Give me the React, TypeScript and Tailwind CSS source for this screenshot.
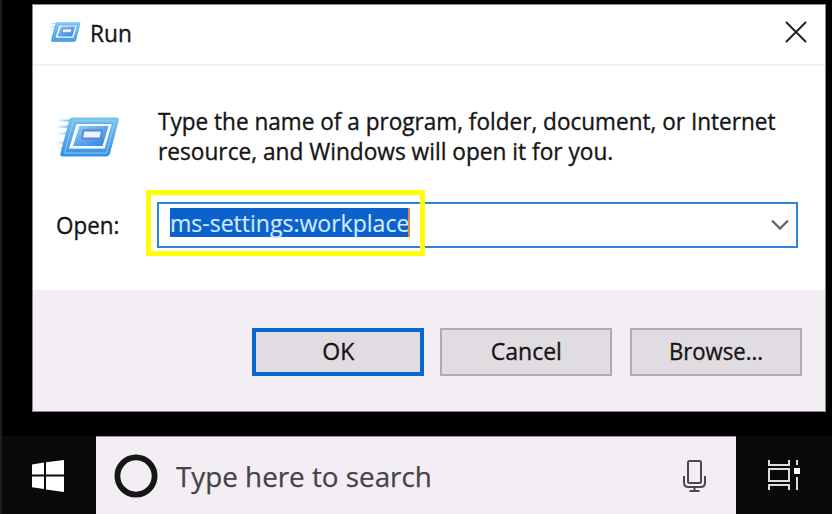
import React from "react";

function RunIcon({ className }: { className: string }) {
  return (
    <svg className={className} viewBox="0 0 64 44" fill="none">
      <defs>
        <linearGradient id="frame" x1="0" y1="0" x2="0" y2="1">
          <stop offset="0" stopColor="#7fc4ee" />
          <stop offset="1" stopColor="#3390e6" />
        </linearGradient>
        <linearGradient id="core" x1="0" y1="0" x2="1" y2="1">
          <stop offset="0" stopColor="#8fcdf2" />
          <stop offset="1" stopColor="#2b83e6" />
        </linearGradient>
        <linearGradient id="trail" x1="0" y1="0" x2="1" y2="0">
          <stop offset="0" stopColor="#a9d4f3" stopOpacity="0.1" />
          <stop offset="1" stopColor="#6fb4ea" />
        </linearGradient>
      </defs>
      <path d="M2 4.500h12v2H2zM1 10.500h11v2.500H1zM2 17.500h9v2H2zM0 26.500h8v2.500H0zM2 32.500h5v1.500H2z" fill="url(#trail)" />
      <path d="M16 2.500H60.500Q63.500 2.500 62.800 5.500L54 38.500Q53 41.500 50 41.500H7Q3.500 41.500 4.500 38L13 5.500Q14 2.500 16 2.500Z" fill="url(#frame)" />
      <path d="M17.500 5.500H59L50.500 38H8.500Z" stroke="#8ccaf2" strokeWidth="1" />
      <path d="M20 8.500H56.500L49 34H12.500Z" fill="#f7fbff" stroke="#4c9ddd" strokeWidth="0.800" />
      <path d="M23.500 11H52.500L46.500 31H17Z" fill="url(#core)" />
      <path d="M27.500 15.500H46L44.500 23.500H26Z" fill="#eef4ff" stroke="#5b83d6" strokeWidth="1.800" strokeLinejoin="round" />
    </svg>
  );
}

function Button({ label, primary, className = "", inner }: { label: string; primary?: boolean; className?: string; inner: string }) {
  return (
    <button
      className={
        "flex h-12 w-[172px] justify-center bg-[#e1dce1] text-[#151515] [-webkit-text-stroke:0.35px] " +
        (primary ? "border-4 border-[#0b66d2] pt-[4px] " : "border-2 border-[#adadad] pt-[6px] ") +
        className
      }
    >
      <span className={"whitespace-nowrap text-[23.5px] leading-[30px] " + inner}>{label}</span>
    </button>
  );
}

export default function App() {
  return (
    <div className="relative flex h-[514px] w-[832px] flex-col overflow-hidden border-l-2 border-[#1c1c1c] bg-black font-['Open_Sans','Noto_Sans',sans-serif] text-[23.5px] leading-[30px] text-[#151515]">
      <section className="mt-1 ml-[30px] flex h-[408px] w-[794px] shrink-0 flex-col border border-[#8a888a] bg-white [-webkit-text-stroke:0.35px]">
        <header className="flex h-[61px] shrink-0 items-start border-b-2 border-[#f4eff5] pl-4">
          <RunIcon className="mt-4 h-[22px] w-8" />
          <h1 className="mt-[13px] ml-[9px] origin-left scale-x-[0.965] whitespace-nowrap">Run</h1>
          <svg className="mt-4 mr-[18px] ml-auto h-[22px] w-[22px]" viewBox="0 0 22 22">
            <path d="M1 1L21 21M21 1L1 21" stroke="#252525" strokeWidth="2" />
          </svg>
        </header>
        <main className="h-[224px] shrink-0">
          <div className="flex pt-10 pl-[23px]">
            <RunIcon className="mt-[9px] h-11 w-16" />
            <p className="ml-[38px] whitespace-nowrap">
              <span className="block origin-left scale-x-[0.96]">Type the name of a program, folder, document, or Internet</span>
              <span className="block origin-left scale-x-[0.965]">resource, and Windows will open it for you.</span>
            </p>
          </div>
          <div className="flex pt-[35px] pl-[23px]">
            <label className="mt-[9px] w-[101px] whitespace-nowrap">
              <span className="inline-block origin-left scale-x-[0.955]">Open:</span>
            </label>
            <div className="mt-px flex h-[46px] w-[641px] items-start border-2 border-[#2f84da] pt-1 pl-[11px] [-webkit-text-stroke:0.15px]">
              <div className="h-[29px] w-[240px] border-r-2 border-[#e58543] bg-[#0b62cd] text-[#d5e9ff]">
                <span className="inline-block origin-left scale-x-[0.98] whitespace-nowrap leading-[30px]">ms-settings:workplace</span>
              </div>
              <svg className="mt-[11px] mr-[7px] ml-auto h-3 w-[18px]" viewBox="0 0 18 12" fill="none">
                <path d="M1 1.500L9 9.500L17 1.500" stroke="#666" strokeWidth="2.300" />
              </svg>
            </div>
          </div>
        </main>
        <footer className="flex flex-1 justify-end bg-[#f3eef4] pt-[38px] pr-[23px]">
          <Button label="OK" primary className="mr-4" inner="scale-x-[0.98]" />
          <Button label="Cancel" className="mr-[18px]" inner="scale-x-[0.98]" />
          <Button label="Browse..." inner="scale-x-[0.94]" />
        </footer>
      </section>
      <nav className="mt-6 flex h-[78px] shrink-0 bg-[#0a0a0a]">
        <div className="flex w-[94px] pt-6 pl-[30px]">
          <svg className="h-8 w-8" viewBox="0 0 32 32" fill="#fff">
            <path d="M0 4.500L12 2.500V14.500H0ZM14 2.200L32 0V14.500H14ZM0 16.500H12V29L0 27.300ZM14 16.500H32V32L14 29.400Z" />
          </svg>
        </div>
        <div className="flex w-[640px] border-t border-[#929092] bg-[#f3eef4] pl-[18px] text-[#454347]">
          <svg className="mt-[17px] h-11 w-11" viewBox="0 0 44 44">
            <circle cx="22" cy="22" r="18.600" fill="none" stroke="#161616" strokeWidth="5.800" />
          </svg>
          <span className="mt-[19px] ml-[18px] origin-left scale-x-[0.993] whitespace-nowrap text-[28px] leading-10 [-webkit-text-stroke:0.25px]">Type here to search</span>
          <svg className="mt-[22px] mr-[29px] ml-auto h-[34px] w-6" viewBox="0 0 24 34" fill="none" stroke="#4a484c" strokeWidth="2">
            <rect x="5" y="2" width="13" height="22" rx="1.500" />
            <path d="M1 17V23.500Q1 28 5.500 28H17.500Q22 28 22 23.500V17M11.500 28V32M6.500 32H16.500" />
          </svg>
        </div>
        <svg className="mt-6 ml-[31px] h-[31px] w-[33px]" viewBox="0 0 33 31" fill="none" stroke="#ddd" strokeWidth="2">
          <path d="M2 0V5H22V0M2 30V25H22V30M30 0V5M30 17V30" />
          <rect x="2" y="9" width="20" height="12" />
          <rect x="27" y="8" width="6" height="6" fill="#fff" stroke="none" />
        </svg>
      </nav>
      <div className="absolute top-[190px] left-[144px] h-[66px] w-[279px] border-[5px] border-[#ffff00]" />
    </div>
  );
}
